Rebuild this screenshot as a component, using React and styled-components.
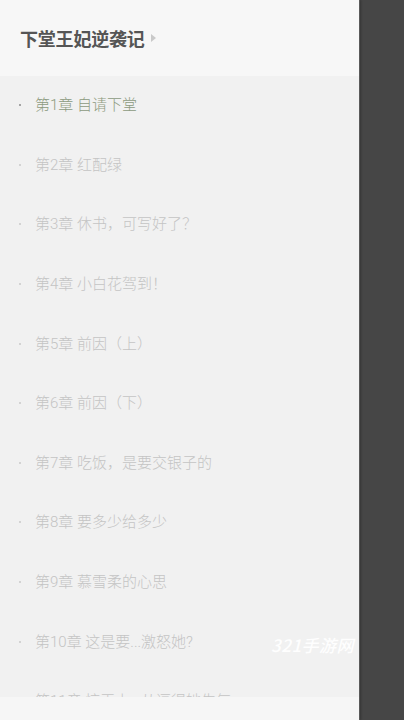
import React from 'react';
import styled, { createGlobalStyle } from 'styled-components';

const GlobalStyle = createGlobalStyle`
  html, body {
    margin: 0;
    padding: 0;
    background: #464646;
  }
  body {
    font-family: Roboto, "Noto Sans CJK SC", sans-serif;
  }
`;

const Screen = styled.div`
  width: 404px;
  height: 720px;
  display: flex;
  overflow: hidden;
  background: #464646;
`;

const Drawer = styled.div`
  position: relative;
  width: 359px;
  height: 720px;
  display: flex;
  flex-direction: column;
  background: #f1f1f1;
  box-shadow: 1px 0 0 #5a5a5a, 2px 0 2px rgba(0, 0, 0, 0.25);
`;

const Header = styled.div`
  height: 76px;
  flex: none;
  display: flex;
  align-items: center;
  padding: 0 0 0 20px;
  background: #f7f7f7;
  box-sizing: border-box;
`;

const Title = styled.div`
  font-family: "Noto Sans CJK SC", sans-serif;
  font-size: 18px;
  font-weight: 700;
  color: #555555;
  line-height: 1;
  letter-spacing: -0.2px;
`;

const Arrow = styled.span`
  display: inline-block;
  width: 0;
  height: 0;
  margin-left: 6px;
  border-top: 4px solid transparent;
  border-bottom: 4px solid transparent;
  border-left: 5px solid #c9c9c9;
`;

const List = styled.div`
  flex: 1;
  overflow: hidden;
`;

const Row = styled.div`
  height: 59.6px;
  display: flex;
  align-items: center;
  padding-left: 19px;
`;

const Bullet = styled.span`
  width: 2px;
  height: 2px;
  border-radius: 1px;
  margin-right: 14px;
  margin-top: -1px;
  background: ${p => (p.$active ? '#8a8a8a' : '#c8c8c8')};
`;

const ChapterName = styled.span`
  font-size: 15px;
  font-weight: 300;
  line-height: 1;
  color: ${p => (p.$active ? '#8c9a7e' : '#c4c4c4')};
  white-space: nowrap;
`;

const BottomBar = styled.div`
  height: 23px;
  flex: none;
  background: #f6f6f6;
`;

const Watermark = styled.div`
  position: absolute;
  left: 271px;
  top: 632px;
  font-family: "Noto Sans CJK SC", sans-serif;
  font-size: 17px;
  font-style: italic;
  font-weight: 500;
  color: rgba(255, 255, 255, 0.95);
  letter-spacing: 0.5px;
`;

const chapters = [
  '第1章 自请下堂',
  '第2章 红配绿',
  '第3章 休书，可写好了？',
  '第4章 小白花驾到！',
  '第5章 前因（上）',
  '第6章 前因（下）',
  '第7章 吃饭，是要交银子的',
  '第8章 要多少给多少',
  '第9章 慕雪柔的心思',
  '第10章 这是要...激怒她?',
  '第11章 惊王上...从逗得她生气',
];

export default function App() {
  return (
    <>
      <GlobalStyle />
      <Screen>
        <Drawer>
          <Header>
            <Title>下堂王妃逆袭记</Title>
            <Arrow />
          </Header>
          <List>
            {chapters.map((c, i) => (
              <Row key={c}>
                <Bullet $active={i === 0} />
                <ChapterName $active={i === 0}>{c}</ChapterName>
              </Row>
            ))}
          </List>
          <BottomBar />
          <Watermark>321手游网</Watermark>
        </Drawer>
      </Screen>
    </>
  );
}
